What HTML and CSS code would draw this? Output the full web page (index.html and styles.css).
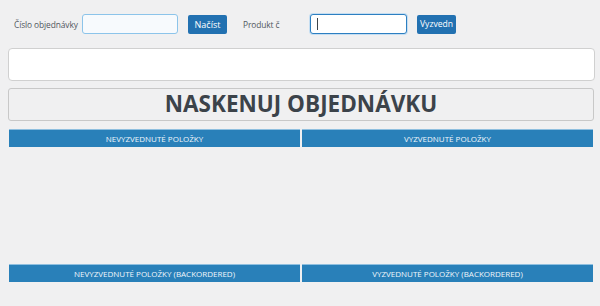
FILE: index.html
```html
<!DOCTYPE html>
<html lang="cs">
<head>
<meta charset="utf-8">
<link rel="stylesheet" href="styles.css">
</head>
<body>
<div class="page">
  <div class="toolbar">
    <label class="lbl lbl-order">Číslo objednávky</label>
    <input class="field" type="text">
    <button class="btn btn-load">Načíst</button>
    <label class="lbl lbl-product">Produkt č</label>
    <span class="caret-wrap"><input class="field field-focus" type="text"></span>
    <button class="btn btn-pick">Vyzvedn</button>
  </div>
  <div class="scanbox"></div>
  <div class="scanbtn">NASKENUJ OBJEDNÁVKU</div>
  <div class="cols">
    <div class="col">
      <div class="head">NEVYZVEDNUTÉ POLOŽKY</div>
    </div>
    <div class="col">
      <div class="head">VYZVEDNUTÉ POLOŽKY</div>
    </div>
  </div>
  <div class="cols cols-bottom">
    <div class="col">
      <div class="head">NEVYZVEDNUTÉ POLOŽKY (BACKORDERED)</div>
    </div>
    <div class="col">
      <div class="head">VYZVEDNUTÉ POLOŽKY (BACKORDERED)</div>
    </div>
  </div>
</div>
</body>
</html>
```

FILE: styles.css
```css
html, body {
  margin: 0;
  padding: 0;
  background: #f0f0f1;
  font-family: "Open Sans", "Noto Sans", sans-serif;
}
.page {
  padding: 14px 5px 0 8px;
}
.toolbar {
  display: flex;
  align-items: center;
  height: 20px;
  padding-left: 6px;
}
.lbl {
  font-size: 8.4px;
  letter-spacing: -0.1px;
  color: #50575e;
  white-space: nowrap;
}
.lbl-order { width: 68px; }
.lbl-product { width: 67px; margin-left: 16px; }
.field {
  box-sizing: border-box;
  width: 96px;
  height: 20px;
  margin: 0;
  border: 1px solid #8cc4ea;
  border-radius: 3px;
  background: #f7fafd;
  padding: 0 4px;
  outline: none;
}
.caret-wrap {
  position: relative;
  display: flex;
}
.caret-wrap::after {
  content: "";
  position: absolute;
  left: 7px;
  top: 4px;
  width: 1px;
  height: 12px;
  background: #3c434a;
}
.field-focus {
  width: 97px;
  border-color: #2d7fc1;
  background: #fff;
  box-shadow: 0 0 0 1px #c5def2;
}
.btn {
  box-sizing: border-box;
  height: 19px;
  width: 39px;
  margin-left: 10px;
  padding: 0;
  border: none;
  border-radius: 2px;
  background: #2271b1;
  color: #fff;
  font-family: "Open Sans", sans-serif;
  font-size: 9px;
  overflow: hidden;
  white-space: nowrap;
  text-align: center;
}
.btn-pick { text-align: left; padding-left: 3px; font-size: 8.6px; }
.scanbox {
  box-sizing: border-box;
  margin-top: 14px;
  height: 33px;
  width: 587px;
  background: #fff;
  border: 1px solid #d0d0d0;
  border-radius: 4px;
}
.scanbtn {
  box-sizing: border-box;
  margin-top: 7px;
  height: 33px;
  width: 586px;
  border: 1px solid #c8c8c8;
  border-radius: 3px;
  background: #f0f0f1;
  color: #3c434a;
  font-weight: 700;
  font-size: 22.5px;
  line-height: 30px;
  text-align: center;
}
.cols {
  display: grid;
  grid-template-columns: 291px 291px;
  column-gap: 2px;
  margin-top: 8px;
  margin-left: 1px;
  height: 135px;
}
.cols-bottom { margin-top: 0; height: 18px; }
.head {
  box-sizing: border-box;
  height: 18px;
  background: #2980b9;
  border-top: 1px solid #8fbfdf;
  color: #f0f6fb;
  font-size: 8px;
  line-height: 17px;
  text-align: center;
}
```
